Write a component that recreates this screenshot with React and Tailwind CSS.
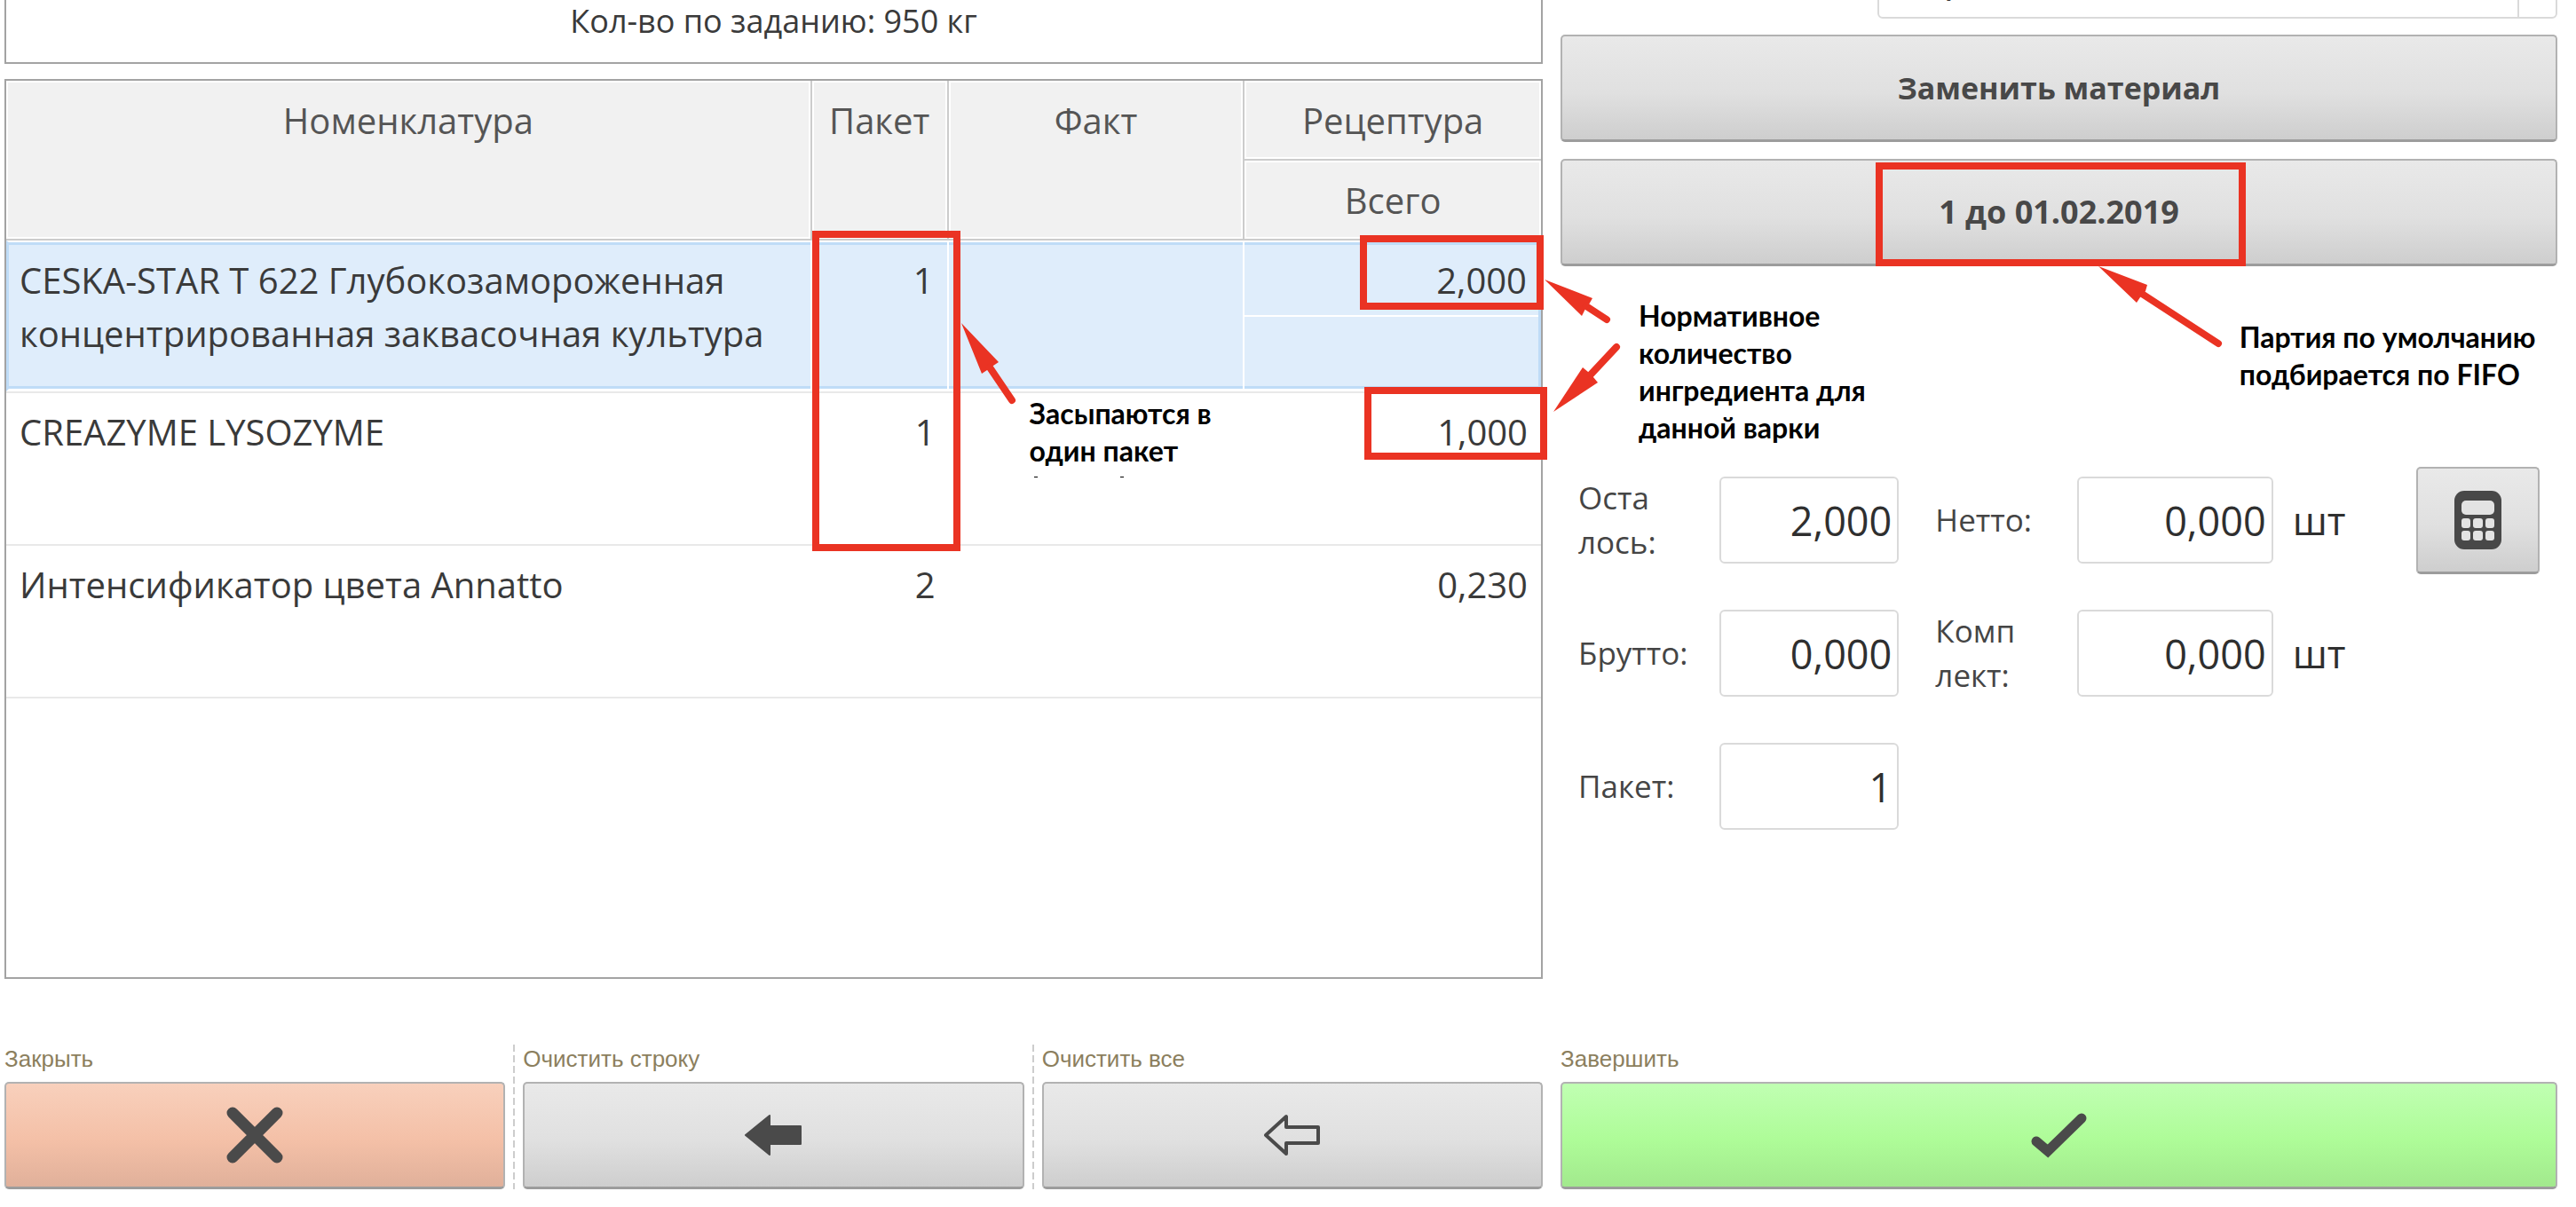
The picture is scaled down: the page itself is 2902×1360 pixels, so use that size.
import React from "react";

const gray =
  "bg-[linear-gradient(#e9e9e9,#e0e0e0_55%,#cecece)]";
const peach =
  "bg-[linear-gradient(#f8d0bc,#f4c0a7_55%,#e0b09a)]";
const green =
  "bg-[linear-gradient(#c0ffb2,#aefc98_55%,#a2e98d)]";

function PushButton({ tone = gray, size = "text-[34px]", className = "", children, ...rest }) {
  return (
    <button
      type="button"
      className={`flex h-[121px] items-center justify-center rounded-[5px] border-2 border-b-[3px] border-[#b2b2b2] border-b-[#9c9c9c] font-bold text-[#484848] ${size} ${tone} ${className}`}
      {...rest}
    >
      {children}
    </button>
  );
}

function CommandButton({ id, label, tone, children }) {
  return (
    <div className="flex min-w-0 flex-1 flex-col gap-[10px]">
      <label
        htmlFor={id}
        className="font-['Liberation_Sans',sans-serif] text-[26px] leading-8 text-[#8c7f5e]"
      >
        {label}
      </label>
      <PushButton id={id} tone={tone} className="w-full">
        {children}
      </PushButton>
    </div>
  );
}

function DashedDivider() {
  return (
    <div className="flex w-5 shrink-0 justify-center">
      <div className="w-[2px] bg-[repeating-linear-gradient(#cdcdcd_0_8px,transparent_8px_12px)]" />
    </div>
  );
}

function Field({ id, value }) {
  return (
    <input
      id={id}
      defaultValue={value}
      className="h-[98px] w-full min-w-0 rounded-[6px] border-2 border-[#dadada] bg-white px-[6px] text-right text-[45px] text-[#2f2f2f]"
    />
  );
}

function FieldLabel({ htmlFor, children }) {
  return (
    <label htmlFor={htmlFor} className="text-[35px] leading-[50px] text-[#454545]">
      {children}
    </label>
  );
}

/* Arrow drawn as a filled head and a round-capped shaft. */
function Arrow({ className, width, height, head, shaft }) {
  return (
    <svg
      className={`pointer-events-none absolute z-10 ${className}`}
      width={width}
      height={height}
      viewBox={`0 0 ${width} ${height}`}
      fill="#ea3323"
      stroke="#ea3323"
      aria-hidden="true"
    >
      <path d={head} stroke="none" />
      <path d={shaft} strokeWidth="8" strokeLinecap="round" />
    </svg>
  );
}

const note =
  "absolute z-10 whitespace-nowrap font-['Lato','Open_Sans',sans-serif] text-[32px] font-bold leading-[42px] text-black";
const mark = "pointer-events-none absolute z-10 border-8 border-[#ea3323]";
const head =
  "border-b-2 border-r-2 border-[#cccccc] bg-[#f1f1f1] px-0 pt-[15px] align-top text-[40px] font-normal leading-[60px] text-[#555] shadow-[inset_0_0_0_2px_#fff] last:border-r-0";
const picked =
  "border-t-2 border-b-[3px] border-y-white bg-[#dfedfb] pt-[13px] align-top shadow-[inset_0_3px_0_#bfdcf7,inset_0_-3px_0_#bfdcf7]";
const plain = "border-b-2 border-[#e9e9e9] px-[15px] pt-[14px] align-top";

export default function App() {
  return (
    <div className="min-h-screen bg-white pl-[5px] pr-[21px] font-['Open_Sans','Noto_Sans',sans-serif] text-[#3a3a3a]">
      <div className="grid grid-cols-[1733fr_1123fr] gap-x-5">
        <section className="flex min-w-0 flex-col gap-[17px]">
          <div className="flex h-[72px] justify-center border-2 border-t-0 border-[#a3a3a3]">
            <p className="text-[36px] leading-[48px]">Кол-во по заданию: 950 кг</p>
          </div>

          <div className="h-[1014px] border-2 border-[#a3a3a3]">
            <table className="w-full table-fixed border-separate border-spacing-0">
              <colgroup>
                <col className="w-[52.5%]" />
                <col className="w-[8.9%]" />
                <col className="w-[19.3%]" />
                <col className="w-[19.3%]" />
              </colgroup>
              <thead>
                <tr className="h-[90px]">
                  <th rowSpan={2} className={head}>Номенклатура</th>
                  <th rowSpan={2} className={head}>Пакет</th>
                  <th rowSpan={2} className={head}>Факт</th>
                  <th className={head}>Рецептура</th>
                </tr>
                <tr className="h-[90px]">
                  <th className={head}>Всего</th>
                </tr>
              </thead>
              <tbody className="text-[40px] leading-[60px]">
                <tr className="h-[170px]">
                  <td className={`${picked} border-l-[3px] border-r-2 border-l-[#bfdcf7] border-r-white pl-[12px]`}>
                    CESKA-STAR T 622 Глубокозамороженная
                    <br />
                    концентрированная заквасочная культура
                  </td>
                  <td className={`${picked} relative border-r-2 border-r-white pr-[15px] text-right`}>
                    1
                    <div className={`${mark} -right-[15px] -top-[13px] left-0 h-[361px]`} />
                  </td>
                  <td className={`${picked} relative border-r-2 border-r-white`}>
                    <Arrow
                      className="left-[14px] top-[91px]"
                      width={64}
                      height={96}
                      head="M0 0 42 44 36 48 29 53 23 57Z"
                      shaft="M32 50 57 87"
                    />
                    <p className={`${note} left-[91px] top-[172px]`}>
                      Засыпаются в
                      <br />
                      один пакет
                    </p>
                    <div className="absolute left-[96px] top-[264px] z-10 flex gap-[93px]">
                      <i className="h-px w-1 bg-black" />
                      <i className="h-px w-1 bg-black" />
                    </div>
                  </td>
                  <td className={`${picked} relative border-r-[3px] border-r-[#bfdcf7] px-0`}>
                    <div className="h-[71px] border-b-2 border-white pr-[13px] text-right">2,000</div>
                    <div className="h-[79px]" />
                    <div className={`${mark} -right-[6px] -top-[8px] h-[84px] w-[207px]`} />
                  </td>
                </tr>
                <tr className="h-[174px]">
                  <td className={`${plain} border-t-2`}>CREAZYME LYSOZYME</td>
                  <td className={`${plain} border-t-2 text-right`}>1</td>
                  <td className={`${plain} border-t-2`} />
                  <td className={`${plain} relative border-t-2 text-right`}>
                    1,000
                    <div className={`${mark} -right-[7px] -top-[7px] h-[82px] w-[206px]`} />
                  </td>
                </tr>
                <tr className="h-[172px]">
                  <td className={plain}>Интенсификатор цвета Annatto</td>
                  <td className={`${plain} text-right`}>2</td>
                  <td className={plain} />
                  <td className={`${plain} text-right`}>0,230</td>
                </tr>
              </tbody>
            </table>
          </div>
        </section>

        <section className="relative flex min-w-0 flex-col">
          <div className="-mt-[77px] ml-[31.8%] flex h-[98px] rounded-[6px] border-2 border-[#dadada]">
            <input
              aria-label="Материал"
              defaultValue="Сыр"
              className="min-w-0 flex-1 px-2 text-[46px]"
            />
            <button type="button" aria-label="Выбрать" className="w-[43px] border-l-2 border-[#dadada]" />
          </div>
          <PushButton className="mt-[18px] w-full">Заменить материал</PushButton>
          <div className="relative mt-[19px]">
            <PushButton size="text-[36px]" className="w-full">1 до 01.02.2019</PushButton>
            <div className={`${mark} left-[31.6%] right-[31.3%] top-[4px] h-[117px]`} />
            <Arrow
              className="left-[54%] top-[121px]"
              width={142}
              height={96}
              head="M0 0 55 21 53 28 47 35 43 41Z"
              shaft="M49 31 135 87"
            />
            <p className={`${note} left-[68.1%] top-[180px]`}>
              Партия по умолчанию
              <br />
              подбирается по FIFO
            </p>
          </div>

          <Arrow
            className="-left-[18px] top-[315px]"
            width={80}
            height={52}
            head="M0 0 54 21 50 28 46 33 42 41Z"
            shaft="M47 30 70 45"
          />
          <Arrow
            className="-left-[8px] top-[384px]"
            width={80}
            height={82}
            head="M0 80 33 30 39 35 45 41 50 47Z"
            shaft="M42 38 71 7"
          />
          <p className={`${note} left-[88px] top-[335px]`}>
            Нормативное
            <br />
            количество
            <br />
            ингредиента для
            <br />
            данной варки
          </p>

          <form className="mt-[211px] grid auto-rows-[150px] grid-cols-[159fr_202fr_41fr_159fr_221fr_300fr] items-center px-5">
            <FieldLabel htmlFor="left">
              Оста
              <br />
              лось:
            </FieldLabel>
            <Field id="left" value="2,000" />
            <span />
            <FieldLabel htmlFor="net">Нетто:</FieldLabel>
            <Field id="net" value="0,000" />
            <div className="flex items-center justify-between pl-[22px]">
              <span className="text-[44px] leading-[60px] text-[#2f2f2f]">шт</span>
              <PushButton className="w-[139px]" aria-label="Калькулятор">
                <svg width="53" height="66" viewBox="0 0 53 66" aria-hidden="true">
                  <rect width="53" height="66" rx="11" fill="#484848" />
                  <g fill="#e3e3e3">
                    <rect x="8" y="11" width="37" height="16" rx="5" />
                    <rect x="8" y="31" width="10" height="11" rx="3" />
                    <rect x="21" y="31" width="11" height="11" rx="3" />
                    <rect x="35" y="31" width="10" height="11" rx="3" />
                    <rect x="8" y="45" width="10" height="11" rx="3" />
                    <rect x="21" y="45" width="11" height="11" rx="3" />
                    <rect x="35" y="45" width="10" height="11" rx="3" />
                  </g>
                </svg>
              </PushButton>
            </div>

            <FieldLabel htmlFor="gross">Брутто:</FieldLabel>
            <Field id="gross" value="0,000" />
            <span />
            <FieldLabel htmlFor="kit">
              Комп
              <br />
              лект:
            </FieldLabel>
            <Field id="kit" value="0,000" />
            <span className="pl-[22px] text-[44px] leading-[60px] text-[#2f2f2f]">шт</span>

            <FieldLabel htmlFor="pack">Пакет:</FieldLabel>
            <Field id="pack" value="1" />
          </form>
        </section>
      </div>

      <footer className="mt-[74px] grid grid-cols-[1733fr_1123fr] gap-x-5">
        <div className="flex min-w-0">
          <CommandButton id="close" label="Закрыть" tone={peach}>
            <svg width="66" height="66" viewBox="0 0 66 66" stroke="#4a4a4a" strokeWidth="13" strokeLinecap="round" aria-hidden="true">
              <path d="M8 8 58 58M58 8 8 58" />
            </svg>
          </CommandButton>
          <DashedDivider />
          <CommandButton id="clear-row" label="Очистить строку">
            <svg width="66" height="48" viewBox="0 0 66 48" fill="#4a4a4a" stroke="#4a4a4a" strokeWidth="2" strokeLinejoin="round" aria-hidden="true">
              <path d="M2 24 29 2V14H64V34H29V46Z" />
            </svg>
          </CommandButton>
          <DashedDivider />
          <CommandButton id="clear-all" label="Очистить все">
            <svg width="66" height="50" viewBox="0 0 66 50" fill="none" stroke="#4a4a4a" strokeWidth="4" strokeLinejoin="round" aria-hidden="true">
              <path d="M3 25 26 4V16H62V34H26V46Z" />
            </svg>
          </CommandButton>
        </div>
        <CommandButton id="finish" label="Завершить" tone={green}>
          <svg width="66" height="54" viewBox="0 0 66 54" fill="none" stroke="#4a4a4a" strokeWidth="11" strokeLinecap="round" aria-hidden="true">
            <path d="M7 34 20 45 58 8" />
          </svg>
        </CommandButton>
      </footer>
    </div>
  );
}
